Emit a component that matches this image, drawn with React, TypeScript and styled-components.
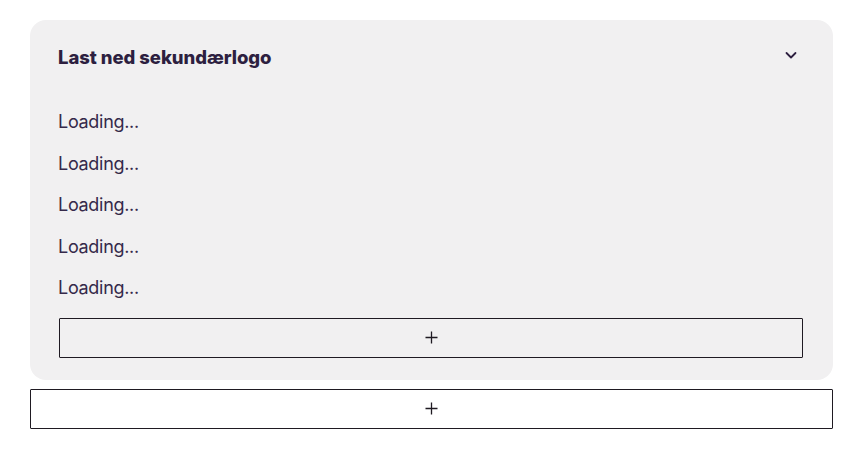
import React from "react";
import styled, { createGlobalStyle } from "styled-components";

const Global = createGlobalStyle`
  html, body { margin: 0; padding: 0; background: #ffffff; }
  body { font-family: Inter, "Noto Sans", sans-serif; }
`;

const Page = styled.div`
  padding: 20px 32px 0 30px;
  display: flex;
  flex-direction: column;
  gap: 9px;
`;

const Card = styled.section`
  background: #f1f0f1;
  border-radius: 16px;
  padding: 25px 30px 22px 29px;
`;

const Header = styled.div`
  display: flex;
  align-items: center;
  justify-content: space-between;
  margin-left: -1px;
`;

const Title = styled.h2`
  margin: 0;
  font-size: 18.5px;
  line-height: 24px;
  font-weight: 800;
  color: #2d1f40;
  letter-spacing: -0.05px;
`;

const Chevron = styled.svg`
  width: 14px;
  height: 14px;
  margin-right: 5px;
  margin-top: -5px;
`;

const List = styled.div`
  margin-top: 32px;
  margin-left: -1px;
  display: flex;
  flex-direction: column;
`;

const Item = styled.div`
  height: 41.5px;
  line-height: 42px;
  font-size: 18px;
  color: #35294a;
  letter-spacing: -0.3px;
`;

const AddButton = styled.button<{ $inset?: boolean }>`
  display: flex;
  align-items: center;
  justify-content: center;
  width: 100%;
  height: 40px;
  margin-top: ${(p) => (p.$inset ? "9px" : "0")};
  border: 1px solid #1f1a22;
  border-radius: 1px;
  background: ${(p) => (p.$inset ? "transparent" : "#ffffff")};
  padding: 0;
  cursor: pointer;
`;

const Plus = styled.svg`
  width: 13px;
  height: 13px;
`;

function PlusIcon() {
  return (
    <Plus viewBox="0 0 13 13" fill="none">
      <path d="M6.5 0.5 V12.5 M0.5 6.5 H12.5" stroke="#1f1a22" strokeWidth="1.3" />
    </Plus>
  );
}

export default function App() {
  return (
    <>
      <Global />
      <Page>
        <Card>
          <Header>
            <Title>Last ned sekundærlogo</Title>
            <Chevron viewBox="0 0 14 14" fill="none">
              <path d="M2.5 5 L7 9.5 L11.5 5" stroke="#2d1f40" strokeWidth="1.8" strokeLinecap="round" strokeLinejoin="round" />
            </Chevron>
          </Header>
          <List>
            {Array.from({ length: 5 }).map((_, i) => (
              <Item key={i}>Loading...</Item>
            ))}
          </List>
          <AddButton $inset aria-label="Legg til">
            <PlusIcon />
          </AddButton>
        </Card>
        <AddButton aria-label="Legg til">
          <PlusIcon />
        </AddButton>
      </Page>
    </>
  );
}
